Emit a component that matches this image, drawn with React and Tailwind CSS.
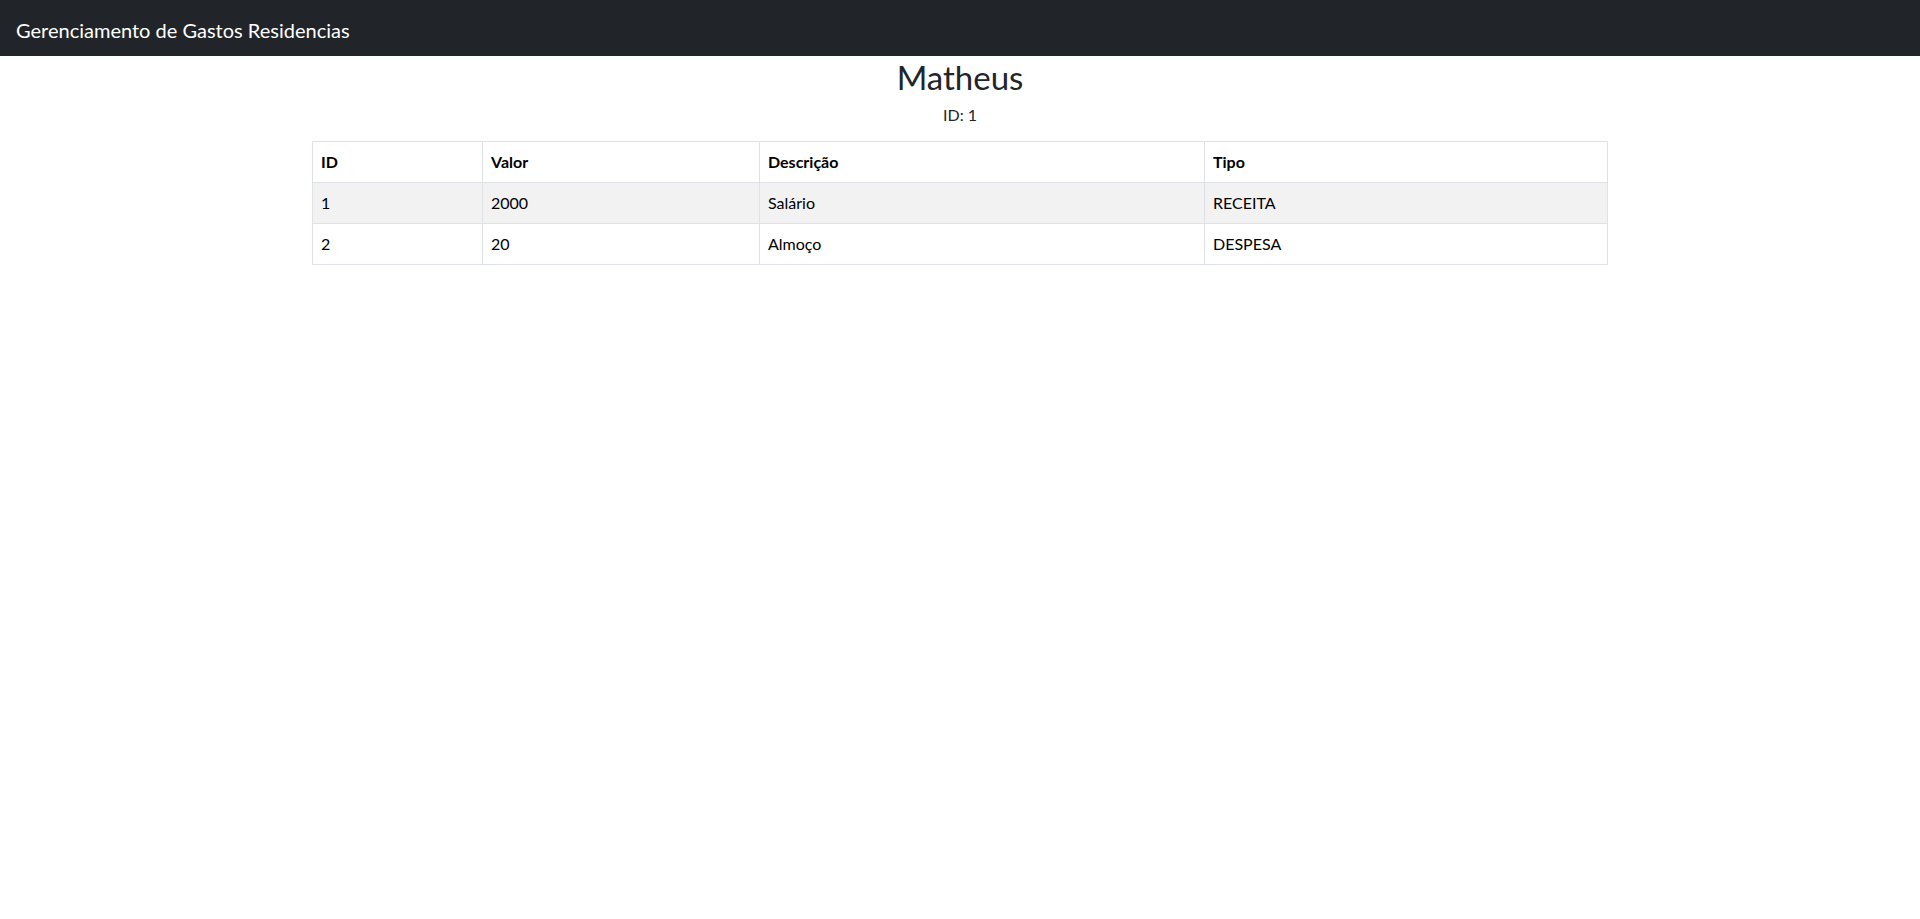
const transacoes = [
  { id: 1, valor: 2000, descricao: 'Salário', tipo: 'RECEITA' },
  { id: 2, valor: 20, descricao: 'Almoço', tipo: 'DESPESA' },
];

export default function App() {
  return (
    <div className="min-h-[919px] bg-white text-[#212529] font-['Lato',sans-serif] text-base leading-6">
      {/* NAVBAR */}
      <nav className="bg-[#212529] h-14 flex items-center px-4 pt-[3px]">
        <span className="text-white text-xl leading-[30px]">Gerenciamento de Gastos Residencias</span>
      </nav>

      {/* CONTEÚDO */}
      <div className="w-[1320px] mx-auto px-3">
        <h2 className="text-center text-[33px] leading-[1.2] pt-[2px] mb-[5px]">Matheus</h2>
        <p className="text-center mb-[14px]">ID: 1</p>

        <table className="w-full border-collapse border border-[#dee2e6] text-black">
          <thead>
            <tr>
              <th className="w-[170px] text-left font-bold p-2 border border-[#dee2e6]">ID</th>
              <th className="w-[277px] text-left font-bold p-2 border border-[#dee2e6]">Valor</th>
              <th className="w-[445px] text-left font-bold p-2 border border-[#dee2e6]">Descrição</th>
              <th className="text-left font-bold p-2 border border-[#dee2e6]">Tipo</th>
            </tr>
          </thead>
          <tbody>
            {transacoes.map((t, i) => (
              <tr key={t.id} className={i % 2 === 0 ? 'bg-[#f2f2f2]' : 'bg-white'}>
                <td className="p-2 border border-[#dee2e6]">{t.id}</td>
                <td className="p-2 border border-[#dee2e6]">{t.valor}</td>
                <td className="p-2 border border-[#dee2e6]">{t.descricao}</td>
                <td className="p-2 border border-[#dee2e6]">{t.tipo}</td>
              </tr>
            ))}
          </tbody>
        </table>
      </div>
    </div>
  );
}
